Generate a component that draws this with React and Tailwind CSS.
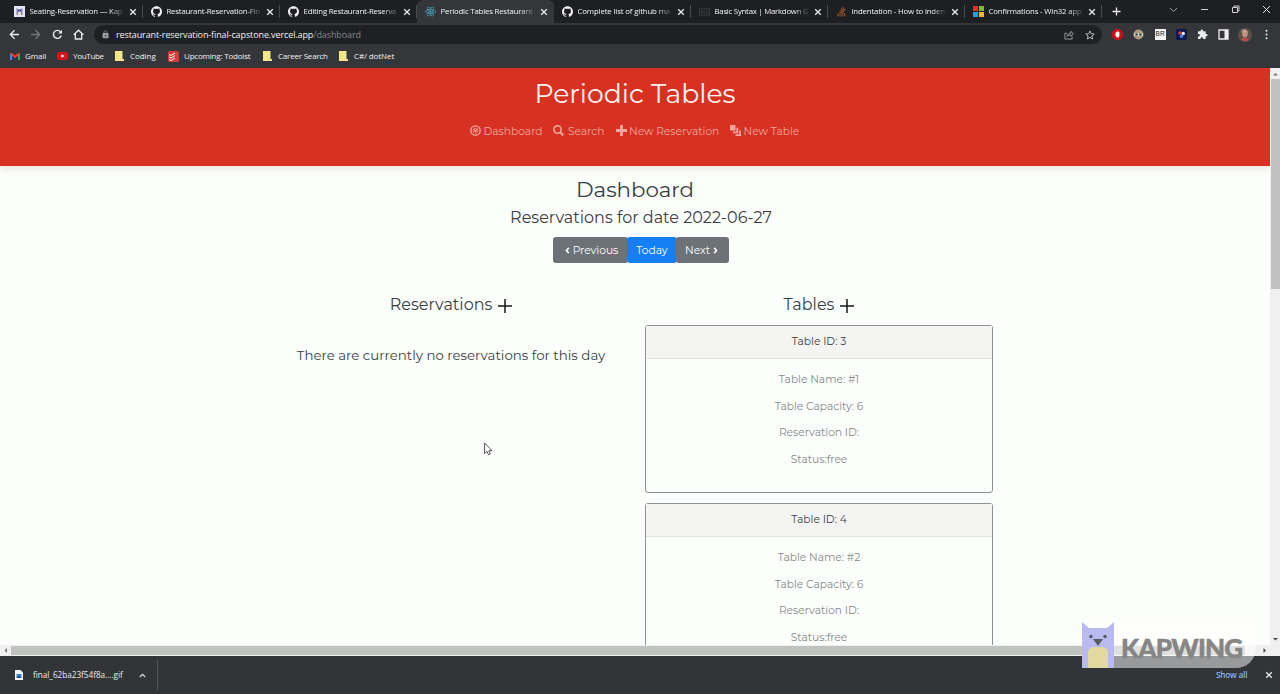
import React from "react";
import { SiGithub } from "react-icons/si";
import { FaStackOverflow, FaReact } from "react-icons/fa";
import { MdExtension, MdLock } from "react-icons/md";

function CloseX({ className = "" }) {
  return (
    <svg viewBox="0 0 8 8" className={"h-2 w-2 shrink-0 " + className} fill="none" stroke="#e8eaed" strokeWidth="1.3">
      <path d="M1.2 1.2 6.8 6.8M6.8 1.2 1.2 6.8" />
    </svg>
  );
}

const KapFavicon = () => (
  <svg viewBox="0 0 11 11" className="h-[11px] w-[11px]">
    <rect width="11" height="11" fill="#e4e4f4" />
    <path d="M2.500 2 4 3h3l1.500-1v7h-6z" fill="#8583bd" />
    <rect x="4" y="6" width="3" height="3" fill="#e7dfc4" />
    <path d="M4 4h1v1H4zM6 4h1v1H6z" fill="#333" />
  </svg>
);
const WinFavicon = () => (
  <svg viewBox="0 0 11 11" className="h-[11px] w-[11px]">
    <path d="M0 0h5v5H0z" fill="#e5302a" />
    <path d="M6 0h5v5H6z" fill="#7cbb2a" />
    <path d="M0 6h5v5H0z" fill="#25a0da" />
    <path d="M6 6h5v5H6z" fill="#f3b71c" />
  </svg>
);
const MdFavicon = () => (
  <svg viewBox="0 0 12 8" className="h-[8px] w-[11px]" fill="none" stroke="#3b3c40" strokeWidth="1">
    <rect x=".5" y=".5" width="11" height="7" />
    <path d="M2.500 6V2.500l1.500 2 1.500-2V6M8.500 2v4M7 4.500 8.500 6 10 4.500" />
  </svg>
);
const Gh = () => <SiGithub className="h-[11px] w-[11px] text-[#f4f4f4]" />;

const TABS = [
  { icon: <KapFavicon />, title: "Seating-Reservation — Kap", track: "tracking-[-0.200px]" },
  { icon: <Gh />, title: "Restaurant-Reservation-Fin", track: "tracking-[-0.200px]" },
  { icon: <Gh />, title: "Editing Restaurant-Reserva", track: "tracking-[-0.200px]" },
  { icon: <FaReact className="h-[11px] w-[11px] text-[#4fb8ce]" />, title: "Periodic Tables Restaurant", track: "tracking-[-0.180px]", active: true },
  { icon: <Gh />, title: "Complete list of github ma", track: "tracking-[-0.130px]" },
  { icon: <MdFavicon />, title: "Basic Syntax | Markdown G", track: "tracking-[-0.240px]" },
  { icon: <FaStackOverflow className="h-[11px] w-[11px] text-[#a65b2d]" />, title: "indentation - How to inden", track: "tracking-[-0.150px]" },
  { icon: <WinFavicon />, title: "Confirmations - Win32 app", track: "tracking-[-0.150px]" },
];

function TabStrip() {
  return (
    <div className="flex h-[23px] bg-[#1e1f22] pl-1.5">
      {TABS.map((t) => (
        <div
          key={t.title}
          className={
            t.active
              ? "flex h-[23px] w-[137px] shrink-0 items-center rounded-t-md bg-[#35363a] pl-2"
              : "flex h-[23px] w-[137px] shrink-0 items-center pl-2"
          }
        >
          <div className="flex w-[15.500px] shrink-0">{t.icon}</div>
          <div
            className={
              "w-[94.500px] whitespace-nowrap text-[7.800px] text-[#f2f3f5] [mask-image:linear-gradient(to_right,black_84%,transparent_102%)] " +
              t.track
            }
          >
            {t.title}
          </div>
          <CloseX className="ml-[5px]" />
          {!t.active && <div className="ml-auto h-[13px] w-px bg-[#4a4b50]" />}
        </div>
      ))}
      <div className="flex flex-1 items-center pl-[10px]">
        <svg viewBox="0 0 9 9" className="h-[9px] w-[9px]" stroke="#eee" strokeWidth="1.300">
          <path d="M4.500 .5v8M.5 4.500h8" />
        </svg>
      </div>
      <div className="flex items-start gap-[22px] pt-[5px] pr-[9px]">
        <svg viewBox="0 0 9 9" className="h-[9px] w-[9px]" fill="none" stroke="#9d9ea1" strokeWidth="1">
          <path d="M1 3l3.500 3.500L8 3" />
        </svg>
        <svg viewBox="0 0 9 9" className="h-[9px] w-[9px]" fill="none" stroke="#d0d0d0" strokeWidth="1">
          <path d="M1 4.500h7" />
        </svg>
        <svg viewBox="0 0 9 9" className="h-[9px] w-[9px]" fill="none" stroke="#d0d0d0" strokeWidth="1">
          <path d="M1.500 2.500h5v5h-5zM3 2.500V1h5v5H6.500" />
        </svg>
        <svg viewBox="0 0 9 9" className="h-[9px] w-[9px]" fill="none" stroke="#e0e0e0" strokeWidth="1">
          <path d="M1 1l7 7M8 1 1 8" />
        </svg>
      </div>
    </div>
  );
}

function Toolbar() {
  return (
    <div className="flex h-[23px] items-center bg-[#35363a] pl-[9px]">
      <div className="flex w-[85px] items-center gap-[10.300px]">
        <svg viewBox="0 0 11 11" className="h-[11px] w-[11px]" fill="none" stroke="#e8eaed" strokeWidth="1.300">
          <path d="M10 5.500H1.500M5.500 1.300 1.300 5.500l4.200 4.200" />
        </svg>
        <svg viewBox="0 0 11 11" className="h-[11px] w-[11px]" fill="none" stroke="#77787c" strokeWidth="1.300">
          <path d="M1 5.500h8.500M5.500 1.300l4.200 4.200-4.200 4.200" />
        </svg>
        <svg viewBox="0 0 11 11" className="h-[11px] w-[11px]" fill="none" stroke="#e8eaed" strokeWidth="1.400">
          <path d="M9.300 6.500A4 4 0 1 1 8.500 2.800" />
          <path d="M10 .8v3.700H6.300z" fill="#e8eaed" stroke="none" />
        </svg>
        <svg viewBox="0 0 11 11" className="h-[11px] w-[11px]" fill="none" stroke="#e8eaed" strokeWidth="1.300">
          <path d="M.7 5.800 5.500 1.200l4.800 4.600M2.300 5v5h6.400V5" />
        </svg>
      </div>
      <div className="flex h-[19px] w-[1008px] items-center rounded-full bg-[#1f2023] pl-[7px] pr-[7px]">
        <MdLock className="h-[9px] w-[9px] text-[#9aa0a6]" />
        <div className="ml-1.5 flex-1 text-[9px] tracking-[-0.110px] text-[#f0f0f1]">
          restaurant-reservation-final-capstone.vercel.app<span className="text-[#85878b]">/dashboard</span>
        </div>
        <svg viewBox="0 0 11 11" className="mr-[11px] h-[10px] w-[10px]" fill="none" stroke="#a0a1a5" strokeWidth="1">
          <path d="M3.500 3.500H1v6.500h8V7.500M3.500 7c.3-2.500 2-3.500 4-3.500V1.500L10.500 4.300 7.500 7V5.300C5.500 5.300 4.500 5.800 3.500 7z" />
        </svg>
        <svg viewBox="0 0 11 11" className="h-[10px] w-[10px]" fill="none" stroke="#c5c6c9" strokeWidth="1">
          <path d="M5.500 1l1.300 3.100 3.400.3-2.600 2.200.8 3.300-2.900-1.800-2.900 1.800.8-3.300L.8 4.400l3.400-.3z" />
        </svg>
      </div>
      <div className="ml-[10px] flex items-center gap-[10.300px]">
        <svg viewBox="0 0 11 11" className="h-[11px] w-[11px]">
          <path d="M3.300 0h4.400L11 3.300v4.400L7.700 11H3.300L0 7.700V3.300z" fill="#c8101c" />
          <path d="M3.500 5V3.500h.9V2.800h1V2.300h1v.7h1v4L6.500 8.500H4.800L3.300 6.300z" fill="#fff" />
        </svg>
        <svg viewBox="0 0 11 11" className="h-[11px] w-[11px]">
          <circle cx="5.500" cy="5.500" r="5" fill="#a89a83" />
          <path d="M1 4h9v3H1z" fill="#d8cfbd" />
          <circle cx="3.500" cy="5.500" r="1.300" fill="#3f4a48" />
          <circle cx="7.500" cy="5.500" r="1.300" fill="#3f4a48" />
        </svg>
        <div className="flex h-[11px] w-[11px] items-center justify-center bg-[#f3f3f3] font-['Liberation_Sans'] text-[6.500px] leading-none text-[#222]">BR</div>
        <svg viewBox="0 0 11 11" className="h-[11px] w-[11px]">
          <rect width="11" height="11" rx="1" fill="#10194a" />
          <circle cx="4" cy="4" r="1.700" fill="#d54141" />
          <circle cx="7.300" cy="4.500" r="1.700" fill="#e9e4e8" />
          <circle cx="5.500" cy="7.300" r="1.700" fill="#4c7ee0" />
        </svg>
        <MdExtension className="h-[11px] w-[11px] text-[#e8eaed]" />
        <svg viewBox="0 0 11 11" className="h-[11px] w-[11px]">
          <path d="M1 1h9v9H1z" fill="none" stroke="#eee" strokeWidth="1.300" />
          <path d="M6.500 1H10v9H6.500z" fill="#eee" />
        </svg>
        <svg viewBox="0 0 14 14" className="-mx-[1.500px] h-[14px] w-[14px]">
          <circle cx="7" cy="7" r="7" fill="#5b5148" />
          <path d="M3 2.500 5 1l3 .3 1.500 2L9 5H4z" fill="#8d8377" />
          <path d="M7 2c2.200 0 3 1.800 2.700 3.800-.2 2-1.400 4-2.700 4s-2.500-2-2.700-4C4 3.800 4.800 2 7 2z" fill="#d3a292" />
          <path d="M5.200 5.300h1.300M7.500 5.300h1.300M6 8h2" stroke="#7c4a42" strokeWidth=".7" />
          <path d="M3 12c.5-2 2-2.500 4-2.500s3.500.5 4 2.500a7 7 0 0 1-8 0z" fill="#b64a4c" />
        </svg>
        <svg viewBox="0 0 11 11" className="h-[11px] w-[11px]" fill="#e8eaed">
          <circle cx="5.500" cy="1.800" r="1" />
          <circle cx="5.500" cy="5.500" r="1" />
          <circle cx="5.500" cy="9.200" r="1" />
        </svg>
      </div>
    </div>
  );
}

const Folder = () => (
  <svg viewBox="0 0 9 10" className="h-[10px] w-[9px] shrink-0">
    <path d="M0 0h7.500v8H9v2H0z" fill="#f3e58c" />
  </svg>
);

function Bookmarks() {
  return (
    <div className="flex h-[22px] items-center bg-[#35363a] pb-[2px] text-[8px] tracking-[-0.200px] text-[#f0f1f3]">
      <div className="flex w-[48px] items-center gap-[5px] pl-[10px]">
        <svg viewBox="0 0 10 8" className="h-[8px] w-[10px] shrink-0" fill="none" strokeWidth="2">
          <path d="M1 8V1.500" stroke="#4285f4" />
          <path d="M9 8V1.500" stroke="#34a853" />
          <path d="M1 1.500 5 5l4-3.500" stroke="#ea4335" />
        </svg>
        <span className="tracking-[-0.080px]">Gmail</span>
      </div>
      <div className="ml-[9px] flex w-[58px] items-center gap-[5px]">
        <svg viewBox="0 0 11 8" className="h-[8px] w-[11px] shrink-0">
          <rect width="11" height="8" rx="2" fill="#d5121d" />
          <path d="M4.300 2.300 7.500 4 4.300 5.700z" fill="#fff" />
        </svg>
        <span className="tracking-[-0.300px]">YouTube</span>
      </div>
      <div className="flex w-[53px] items-center gap-[6px]">
        <Folder />
        <span className="tracking-[-0.050px]">Coding</span>
      </div>
      <div className="flex w-[95px] items-center gap-[5px]">
        <svg viewBox="0 0 11 11" className="h-[11px] w-[11px] shrink-0">
          <rect width="11" height="11" rx="1.500" fill="#d63a3a" />
          <path d="M1 3.500l2 1L7 2M1 6l2 1 4-2.500M1 8.500l2 1L7 7" fill="none" stroke="#fff" strokeWidth="1" />
        </svg>
        <span className="whitespace-nowrap">Upcoming: Todoist</span>
      </div>
      <div className="flex w-[76px] items-center gap-[6px]">
        <Folder />
        <span className="whitespace-nowrap">Career Search</span>
      </div>
      <div className="flex items-center gap-[6px]">
        <Folder />
        <span className="tracking-[-0.100px]">C#/ dotNet</span>
      </div>
    </div>
  );
}

function SiteHeader() {
  return (
    <header className="flex h-[98px] shrink-0 flex-col items-center bg-[#d63122] shadow-[0_3px_8px_rgba(160,110,90,0.18)]">
      <h1 className="mt-[10px] h-8 text-[26.667px] leading-8 text-[#fff3ee]">Periodic Tables</h1>
      <nav className="mt-[14px] flex h-4 w-[330px] items-center text-[10.667px] text-[#f2a69b]">
        <div className="flex w-[83px] items-center gap-[2.500px]">
          <svg viewBox="0 0 12 12" className="-mt-[3px] h-[11px] w-[11px]" fill="none" stroke="currentColor">
            <circle cx="6" cy="6" r="5.100" strokeWidth="1.500" />
            <circle cx="6" cy="6" r="2.500" strokeWidth="1.200" strokeDasharray="1.600 .8" />
            <path d="M4.500 4.800 6 6.800 8 4.200" strokeWidth="1.300" />
          </svg>
          <span>Dashboard</span>
        </div>
        <div className="flex w-[62.500px] items-center gap-[4px]">
          <svg viewBox="0 0 12 12" className="-mt-[3px] h-[11px] w-[11px]" fill="none" stroke="currentColor">
            <circle cx="4.900" cy="4.900" r="4" strokeWidth="1.700" />
            <path d="M7.700 7.700 11.200 11.200" strokeWidth="2.400" />
          </svg>
          <span>Search</span>
        </div>
        <div className="flex w-[114.500px] items-center gap-[2.500px]">
          <svg viewBox="0 0 11 11" className="-mt-[3px] h-[11px] w-[11px]" stroke="currentColor" strokeWidth="2.800">
            <path d="M5.500 0v11M0 5.500h11" />
          </svg>
          <span className="whitespace-nowrap">New Reservation</span>
        </div>
        <div className="flex items-center gap-[2.500px]">
          <svg viewBox="0 0 12 12" className="-mt-[3px] h-[11px] w-[11px]" fill="currentColor">
            <path d="M0 0h6v6H0zM7 3h2v6H3V7h4zM10 6h2v6H6v-2h4z" />
          </svg>
          <span className="whitespace-nowrap">New Table</span>
        </div>
      </nav>
    </header>
  );
}

const BigPlus = () => (
  <svg viewBox="0 0 14 14" className="mt-[3px] h-[14px] w-[14px]" stroke="#151719" strokeWidth="1.500">
    <path d="M7 0v14M0 7h14" />
  </svg>
);

function TableCard({ id, name }) {
  return (
    <div className="mb-[10px] h-[168px] shrink-0 rounded-[3px] border border-[#8f9192] text-center text-[10.667px]">
      <div className="flex h-[33px] items-center justify-center border-b border-[#dfe0df] bg-[#f4f5f3] text-[#3b4045]">Table ID: {id}</div>
      <div className="flex flex-col gap-[10.700px] pt-[13px] leading-4 text-[#85898d]">
        <p>Table Name: {name}</p>
        <p>Table Capacity: 6</p>
        <p>Reservation ID:</p>
        <p>Status:free</p>
      </div>
    </div>
  );
}

function Page() {
  return (
    <div className="flex h-[577px] w-[1270px] flex-col overflow-hidden bg-[#fcfefb] font-[Montserrat,Inter,sans-serif] text-[#3a3f44]">
      <SiteHeader />
      <main className="flex flex-col items-center">
        <h2 className="mt-[9px] h-7 text-[21.333px] leading-7">Dashboard</h2>
        <h4 className="mt-[3px] ml-3 h-6 text-[16px] leading-6">Reservations for date 2022-06-27</h4>
        <div className="mt-[7px] ml-3 flex h-[26px] text-[10.667px] text-white">
          <button className="flex w-[75px] items-center justify-center gap-[3px] rounded-[3px] bg-[#6c7277] pl-[2px] pt-px">
            <svg viewBox="0 0 5 8" className="h-[7px] w-[5px]" fill="none" stroke="#fff" strokeWidth="1.800"><path d="M4 1 1.300 4 4 7" /></svg>
            Previous
          </button>
          <button className="-ml-px flex w-[50px] items-center justify-center rounded-[3px] bg-[#157ff5] pt-px">Today</button>
          <button className="-ml-px flex w-[53px] items-center justify-center gap-[3px] rounded-[3px] bg-[#6c7277] pr-[2px] pt-px">
            Next
            <svg viewBox="0 0 5 8" className="h-[7px] w-[5px]" fill="none" stroke="#fff" strokeWidth="1.800"><path d="M1 1l2.700 3L1 7" /></svg>
          </button>
        </div>
        <div className="mt-[28px] grid w-[736px] grid-cols-2 text-[16px]">
          <section className="flex flex-col items-center">
            <div className="flex h-[27px] items-center gap-[6px]">
              <h4>Reservations</h4>
              <BigPlus />
            </div>
            <p className="mt-[27px] text-[13.333px] leading-5">There are currently no reservations for this day</p>
          </section>
          <section className="flex flex-col px-[10px]">
            <div className="flex h-[27px] items-center justify-center gap-[6px]">
              <h4>Tables</h4>
              <BigPlus />
            </div>
            <div className="mt-[7px] flex flex-col">
              <TableCard id={3} name="#1" />
              <TableCard id={4} name="#2" />
            </div>
          </section>
        </div>
      </main>
    </div>
  );
}

function Watermark() {
  return (
    <div className="absolute left-[1082px] top-[622px] flex h-[46px] w-[176px] items-end">
      <div className="absolute bottom-0 left-0 h-[46px] w-[174px] rounded-br-[20px] bg-white/50" />
      <svg viewBox="0 0 32 46" className="relative h-[46px] w-8">
        <path d="M0 0l7 6h18l7-6v46H0z" fill="#b9baf0" />
        <path d="M6 46V31q0-6 6-6h8q6 0 6 6v15z" fill="#e2da9f" />
        <circle cx="9" cy="14.500" r="1.700" fill="#555a68" />
        <circle cx="23" cy="14.500" r="1.700" fill="#555a68" />
        <path d="M11 17h10l-5 7z" fill="#555a68" />
      </svg>
      <span className="relative mb-[6px] ml-[7px] font-[Lato] text-[26px] font-black leading-7 tracking-[-0.800px] text-[#858685] [-webkit-text-stroke:0.500px_#858685]">KAPWING</span>
    </div>
  );
}

export default function App() {
  return (
    <div className="relative h-[694px] w-[1280px] overflow-hidden bg-[#35363a] font-['Open_Sans','Noto_Sans',sans-serif]">
      <TabStrip />
      <Toolbar />
      <Bookmarks />
      <div className="flex">
        <Page />
        <div className="flex w-[10px] flex-col items-center bg-[#f0f0f0]">
          <svg viewBox="0 0 10 11" className="h-[11px] w-[10px]"><path d="M3 7.500 5.500 5 8 7.500z" fill="#777" /></svg>
          <div className="h-[210px] w-[9px] self-end bg-[#c0c1c0]" />
          <svg viewBox="0 0 10 11" className="mt-auto h-[11px] w-[10px]"><path d="M3 4 5.500 6.500 8 4z" fill="#444" /></svg>
        </div>
      </div>
      <div className="flex h-[11px] bg-[#f0f0f0]">
        <svg viewBox="0 0 11 11" className="h-[11px] w-[11px]"><path d="M7 3 4.500 5.500 7 8z" fill="#777" /></svg>
        <div className="mt-px h-[9px] w-[1234px] bg-[#c0c2bf]" />
        <svg viewBox="0 0 11 11" className="ml-auto mr-[10px] h-[11px] w-[11px]"><path d="M4.500 3 7 5.500 4.500 8z" fill="#444" /></svg>
      </div>
      <div className="flex h-[38px] items-center bg-[#333438] pl-[15px] text-[8.200px] text-[#e8eaed]">
        <svg viewBox="0 0 8 10" className="h-[10px] w-[8px]">
          <path d="M0 0h5.500L8 2.500V10H0z" fill="#f2f4f7" />
          <path d="M1.500 4h5v4h-5z" fill="#3e83c9" />
          <path d="M1.500 8 4 5.500 6.500 8z" fill="#27496f" />
        </svg>
        <span className="ml-[10px] w-[106px] tracking-[-0.020px]">final_62ba23f54f8a....gif</span>
        <svg viewBox="0 0 7 7" className="h-[7px] w-[7px]" fill="none" stroke="#d8d9dc" strokeWidth="1.200"><path d="M.8 5 3.500 2.300 6.200 5" /></svg>
        <div className="ml-[11px] h-[30px] w-px bg-[#56575b]" />
        <span className="ml-auto w-[49px] font-semibold tracking-[-0.200px] text-[#8ab4f8]">Show all</span>
        <CloseX className="mr-[7px]" />
      </div>
      <Watermark />
      <svg viewBox="0 0 9 14" className="absolute left-[484px] top-[442px] h-[14px] w-[9px]">
        <path d="M.6 1v10.500l2.400-2.200 1.500 3.500 1.800-.8-1.500-3.300h3.300z" fill="#fff" stroke="#444" strokeWidth=".9" />
      </svg>
    </div>
  );
}
